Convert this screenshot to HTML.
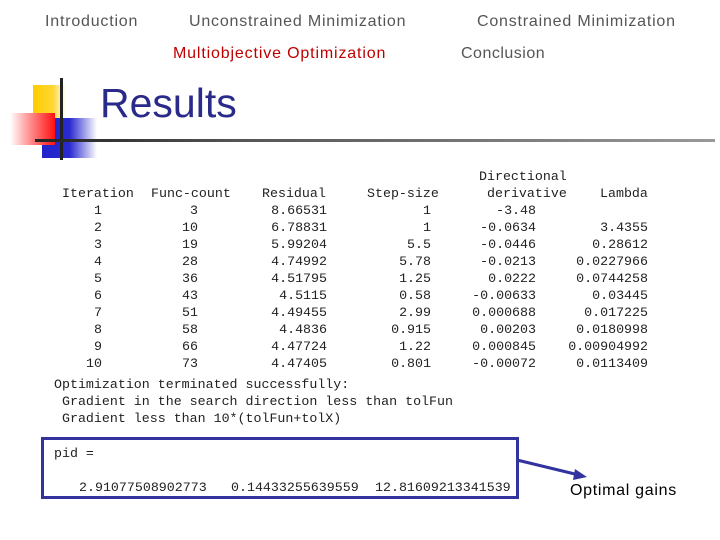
<!DOCTYPE html>
<html><head><style>
body{margin:0;width:720px;height:540px;background:#fff;position:relative;overflow:hidden;font-family:"Liberation Sans",sans-serif}
.a{position:absolute;white-space:pre}
.nav{color:#555;font-size:16px;letter-spacing:0.8px}
.m{font-family:"Liberation Mono",monospace;font-size:13.3px;color:#222;line-height:17px}
.r{display:flex;height:17px}
.r span{text-align:right;display:block;white-space:pre}
</style></head><body>
<div class="a nav" style="left:45px;top:13px">Introduction</div>
<div class="a nav" style="left:189px;top:13px">Unconstrained Minimization</div>
<div class="a nav" style="left:477px;top:13px">Constrained Minimization</div>
<div class="a" style="left:173px;top:45px;font-size:16px;color:#c00000;letter-spacing:0.85px">Multiobjective Optimization</div>
<div class="a nav" style="left:461px;top:45px;letter-spacing:0.5px">Conclusion</div>

<div class="a" style="left:33px;top:85px;width:33px;height:33px;background:linear-gradient(90deg,#ffcc00,#ffd633 60%,#fff)"></div>
<div class="a" style="left:42px;top:118px;width:55px;height:40px;background:linear-gradient(90deg,#2222cc,#2a2ad0 50%,#fff)"></div>
<div class="a" style="left:10px;top:113px;width:45px;height:32px;background:linear-gradient(90deg,#fff,#ff9999 40%,#ff1010)"></div>
<div class="a" style="left:60px;top:78px;width:3px;height:82px;background:#222"></div>
<div class="a" style="left:35px;top:139px;width:680px;height:3px;background:linear-gradient(90deg,#222,#555 30%,#999)"></div>
<div class="a" style="left:100px;top:80px;font-size:41px;color:#2a2a8a">Results</div>

<div class="a m" style="left:479px;top:168px">Directional</div>
<div class="a m" style="left:62px;top:185px">Iteration</div>
<div class="a m" style="left:151px;top:185px">Func-count</div>
<div class="a m" style="left:262px;top:185px">Residual</div>
<div class="a m" style="left:367px;top:185px">Step-size</div>
<div class="a m" style="left:487px;top:185px">derivative</div>
<div class="a m" style="left:600px;top:185px">Lambda</div>
<div class="a m" style="left:54px;top:202px;white-space:normal"><div class="r"><span style="width:48px">1</span><span style="width:96px">3</span><span style="width:129px">8.66531</span><span style="width:104px">1</span><span style="width:105px">-3.48</span><span style="width:112px"></span></div><div class="r"><span style="width:48px">2</span><span style="width:96px">10</span><span style="width:129px">6.78831</span><span style="width:104px">1</span><span style="width:105px">-0.0634</span><span style="width:112px">3.4355</span></div><div class="r"><span style="width:48px">3</span><span style="width:96px">19</span><span style="width:129px">5.99204</span><span style="width:104px">5.5</span><span style="width:105px">-0.0446</span><span style="width:112px">0.28612</span></div><div class="r"><span style="width:48px">4</span><span style="width:96px">28</span><span style="width:129px">4.74992</span><span style="width:104px">5.78</span><span style="width:105px">-0.0213</span><span style="width:112px">0.0227966</span></div><div class="r"><span style="width:48px">5</span><span style="width:96px">36</span><span style="width:129px">4.51795</span><span style="width:104px">1.25</span><span style="width:105px">0.0222</span><span style="width:112px">0.0744258</span></div><div class="r"><span style="width:48px">6</span><span style="width:96px">43</span><span style="width:129px">4.5115</span><span style="width:104px">0.58</span><span style="width:105px">-0.00633</span><span style="width:112px">0.03445</span></div><div class="r"><span style="width:48px">7</span><span style="width:96px">51</span><span style="width:129px">4.49455</span><span style="width:104px">2.99</span><span style="width:105px">0.000688</span><span style="width:112px">0.017225</span></div><div class="r"><span style="width:48px">8</span><span style="width:96px">58</span><span style="width:129px">4.4836</span><span style="width:104px">0.915</span><span style="width:105px">0.00203</span><span style="width:112px">0.0180998</span></div><div class="r"><span style="width:48px">9</span><span style="width:96px">66</span><span style="width:129px">4.47724</span><span style="width:104px">1.22</span><span style="width:105px">0.000845</span><span style="width:112px">0.00904992</span></div><div class="r"><span style="width:48px">10</span><span style="width:96px">73</span><span style="width:129px">4.47405</span><span style="width:104px">0.801</span><span style="width:105px">-0.00072</span><span style="width:112px">0.0113409</span></div></div>
<div class="a m" style="left:54px;top:376px">Optimization terminated successfully:
 Gradient in the search direction less than tolFun
 Gradient less than 10*(tolFun+tolX)</div>

<div class="a" style="left:41px;top:437px;width:472px;height:56px;border:3px solid #3333a0"></div>
<div class="a m" style="left:54px;top:445px">pid =</div>
<div class="a m" style="left:79px;top:479px">2.91077508902773</div>
<div class="a m" style="left:231px;top:479px">0.14433255639559</div>
<div class="a m" style="left:375px;top:479px">12.81609213341539</div>
<svg class="a" style="left:515px;top:455px" width="80" height="30"><line x1="2" y1="5" x2="64" y2="20" stroke="#3333a0" stroke-width="3"/><polygon points="72,22 60,14 58,25" fill="#3333a0"/></svg>
<div class="a" style="left:570px;top:482px;font-size:16px;color:#000;letter-spacing:0.7px">Optimal gains</div>
</body></html>
